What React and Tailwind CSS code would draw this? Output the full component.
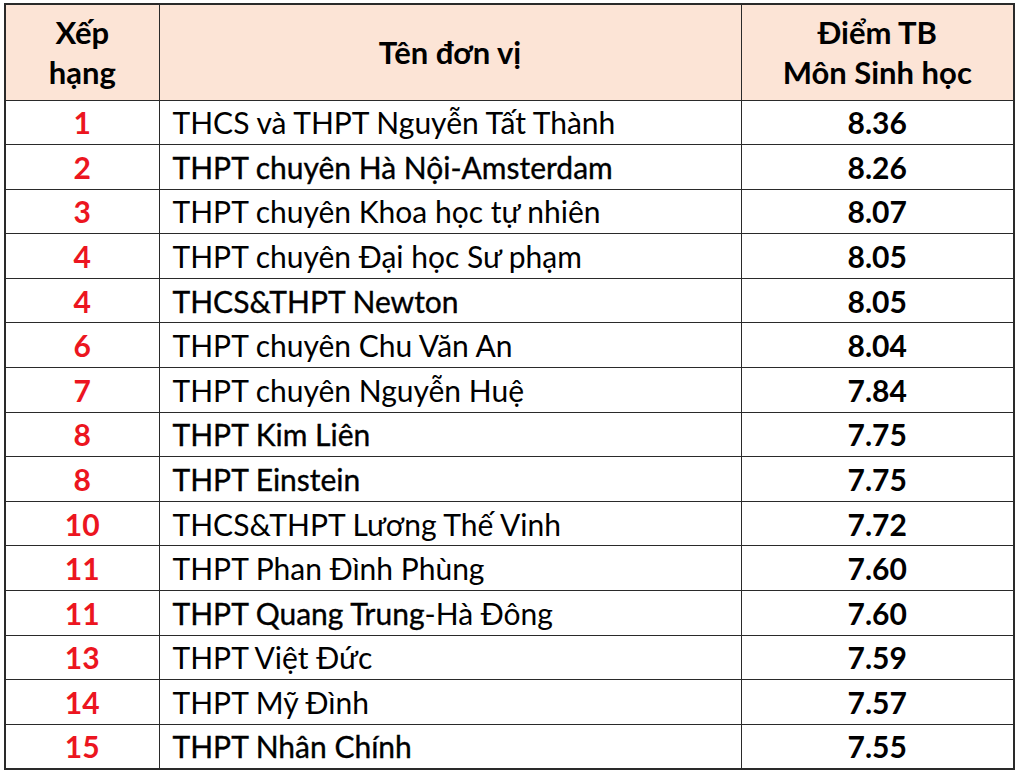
import React from 'react';

const rows = [
  { rank: '1', name: 'THCS và THPT Nguyễn Tất Thành', score: '8.36' },
  { rank: '2', name: 'THPT chuyên Hà Nội-Amsterdam', score: '8.26', medium: true },
  { rank: '3', name: 'THPT chuyên Khoa học tự nhiên', score: '8.07' },
  { rank: '4', name: 'THPT chuyên Đại học Sư phạm', score: '8.05' },
  { rank: '4', name: 'THCS&THPT Newton', score: '8.05', medium: true },
  { rank: '6', name: 'THPT chuyên Chu Văn An', score: '8.04' },
  { rank: '7', name: 'THPT chuyên Nguyễn Huệ', score: '7.84' },
  { rank: '8', name: 'THPT Kim Liên', score: '7.75', medium: true },
  { rank: '8', name: 'THPT Einstein', score: '7.75', medium: true },
  { rank: '10', name: 'THCS&THPT Lương Thế Vinh', score: '7.72' },
  { rank: '11', name: 'THPT Phan Đình Phùng', score: '7.60' },
  { rank: '11', name: 'THPT Quang Trung', tail: '-Hà Đông', score: '7.60', medium: true },
  { rank: '13', name: 'THPT Việt Đức', score: '7.59' },
  { rank: '14', name: 'THPT Mỹ Đình', score: '7.57' },
  { rank: '15', name: 'THPT Nhân Chính', score: '7.55', medium: true },
];

export default function App() {
  return (
    <div className="w-[1020px] h-[775px] bg-white pt-[3px] pl-[4px] font-['Lato','Liberation_Sans',sans-serif] text-black">
      <table className="border-collapse table-fixed w-[1009px] border-2 border-[#2a2a2a]">
        <colgroup>
          <col className="w-[154px]" />
          <col className="w-[582px]" />
          <col className="w-[273px]" />
        </colgroup>
        <thead>
          <tr className="h-[96px] bg-[#fce4d6] text-[31px] font-bold leading-[40px]">
            <th className="border border-[#2a2a2a] text-center font-bold">
              Xếp<br />hạng
            </th>
            <th className="border border-[#2a2a2a] text-center font-bold">Tên đơn vị</th>
            <th className="border border-[#2a2a2a] text-center font-bold">
              Điểm TB<br />Môn Sinh học
            </th>
          </tr>
        </thead>
        <tbody>
          {rows.map((r, i) => (
            <tr key={i} className="h-[44.6px] text-[30px] leading-none">
              <td className="border border-[#2a2a2a] text-center font-bold text-[#ec1520]">{r.rank}</td>
              <td className={`border border-[#2a2a2a] pl-[13px] font-normal ${r.medium ? '[-webkit-text-stroke:0.35px_#000]' : ''}`}>
                {r.name}
                {r.tail && <span className="[-webkit-text-stroke:0px]">{r.tail}</span>}
              </td>
              <td className="border border-[#2a2a2a] text-center font-bold">{r.score}</td>
            </tr>
          ))}
        </tbody>
      </table>
    </div>
  );
}
